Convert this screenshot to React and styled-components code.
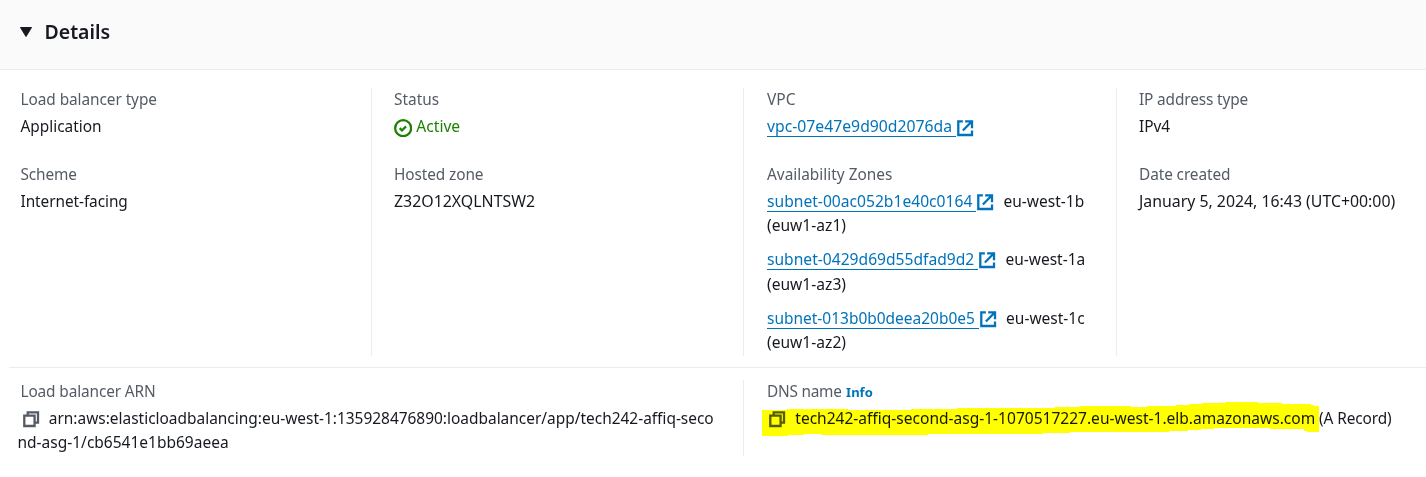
import React from "react";
import styled, { createGlobalStyle } from "styled-components";

const Global = createGlobalStyle`
  body { margin: 0; background: #fff; overflow: hidden; }
  * { box-sizing: border-box; }
`;
const Panel = styled.section`
  width: 1426px; height: 477px; background: #fff; color: #16191f;
  font: 15px/24.5px "Noto Sans", sans-serif;
`;
const Header = styled.header`
  display: flex; align-items: center; gap: 12.5px; height: 70px; padding: 0 0 5px 20px;
  background: #fafafa; border-bottom: 1px solid #eaeded;
`;
const Title = styled.h2`
  margin: 0; font-size: 19.5px; font-weight: 600; line-height: 28px;
`;
const Row = styled.div`
  display: grid; grid-template-columns: ${(p) => p.$columns}; height: ${(p) => p.$height}px;
`;
const MainRow = styled(Row)`margin-top: 18px;`;
const Divider = styled.hr`
  margin: 12px 0 12px 9px; border: 0; height: 1px; background: #eaeded;
`;
const Column = styled.div`
  display: flex; flex-direction: column; gap: 24px; min-width: 0;
  padding-left: ${(p) => p.$pad ?? 22}px;
  border-left: ${(p) => (p.$first ? "0" : "1px solid #eaeded")};
`;
const Field = styled.div`display: flex; flex-direction: column; gap: 2px; margin-top: -1px; margin-bottom: 1px;`;
const Label = styled.div`height: 24.5px; color: #545b64; white-space: nowrap;`;
const Line = styled.div`height: 24.5px; white-space: nowrap;`;
const WrappedLine = styled(Line)`margin: -2.5px 0 0 -3px;`;
const Zones = styled.div`display: flex; flex-direction: column; gap: 9.5px;`;
const T = styled.span`
  font-size: ${(p) => p.$size || 15.4}px;
  letter-spacing: ${(p) => (p.$ls ? `${p.$ls}px` : "normal")};
`;
const Region = styled(T)`margin-left: 5px;`;
const Link = styled.a`
  color: #0073bb; display: inline-flex; height: 24px;
`;
const LinkText = styled(T)`
  border-bottom: 1px solid #0073bb; height: 23px; padding-right: 4px;
`;
const Status = styled.div`display: flex; color: #1d8102; gap: 4px; height: 24.5px;`;
const Info = styled.a`color: #0073bb; font-size: 13px; line-height: 20px; font-weight: 700; margin-left: 4.5px;`;
const Icon = styled.svg`
  width: 18.3px; height: 18.3px; fill: none; stroke: currentColor; stroke-width: 2; flex: none;
`;
const InlineIcon = styled(Icon)`margin-top: ${(p) => p.$top ?? 4.5}px;`;
const StatusIcon = styled(InlineIcon)`margin-left: -0.5px; margin-right: 0.5px;`;
const CopyIcon = styled(Icon)`color: #545b64; vertical-align: -5px; margin: 0 9px 0 1px;`;
const Marked = styled.div`position: relative;`;
const Marker = styled.svg`
  position: absolute; left: -5px; top: -5.5px; width: 558px; height: 40px;
  mix-blend-mode: multiply; pointer-events: none;
`;

const External = ({ top }) => (
  <InlineIcon viewBox="0 0 16 16" $top={top}>
    <path d="M14 8V2H8M14 2 6 10M6 2H2v12h12v-4" />
  </InlineIcon>
);
const Copy = () => (
  <CopyIcon viewBox="0 0 16 16">
    <path d="M2 5h9v9H2zM5 5V2h9v9h-3" />
  </CopyIcon>
);
const Zone = ({ id, size, region, az, top }) => (
  <div>
    <Line><Link><LinkText $size={size}>{id}</LinkText><External top={top} /></Link> <Region $size={15.5}>{region}</Region></Line>
    <Line><T $size={15.6}>{az}</T></Line>
  </div>
);

export default function App() {
  return (
    <Panel>
      <Global />
      <Header>
        <svg width="12" height="10" viewBox="0 0 12 10"><path d="M0.5 0.5h11L6 9.5z" fill="#16191f" stroke="#16191f" strokeLinejoin="round" /></svg>
        <Title>Details</Title>
      </Header>
      <MainRow $columns="371px 372px 373px 1fr" $height={267}>
        <Column $first $pad={20.5}>
          <Field><Label><T $ls={-0.07}>Load balancer type</T></Label><Line><T>Application</T></Line></Field>
          <Field><Label><T $ls={-0.15}>Scheme</T></Label><Line><T $ls={-0.07}>Internet-facing</T></Line></Field>
        </Column>
        <Column>
          <Field>
            <Label><T>Status</T></Label>
            <Status>
              <StatusIcon viewBox="0 0 16 16" $top={5.3}><circle cx="8" cy="8" r="7" /><path d="m5 8 2 2 3.52-3.52" /></StatusIcon>
              <T $size={15.6}>Active</T>
            </Status>
          </Field>
          <Field><Label><T $ls={-0.1}>Hosted zone</T></Label><Line><T $size={15.9}>Z32O12XQLNTSW2</T></Line></Field>
        </Column>
        <Column $pad={23}>
          <Field>
            <Label><T $size={15.5}>VPC</T></Label>
            <Line><Link><LinkText $size={15.75}>vpc-07e47e9d90d2076da</LinkText><External top={5.3} /></Link></Line>
          </Field>
          <Field>
            <Label><T>Availability Zones</T></Label>
            <Zones>
              <Zone id="subnet-00ac052b1e40c0164" size={15.64} region="eu-west-1b" az="(euw1-az1)" />
              <Zone id="subnet-0429d69d55dfad9d2" size={15.62} region="eu-west-1a" az="(euw1-az3)" top={4} />
              <Zone id="subnet-013b0b0deea20b0e5" size={15.48} region="eu-west-1c" az="(euw1-az2)" />
            </Zones>
          </Field>
        </Column>
        <Column>
          <Field><Label><T $ls={-0.14}>IP address type</T></Label><Line><T>IPv4</T></Line></Field>
          <Field><Label><T $ls={-0.1}>Date created</T></Label><Line><T $size={15.85}>January 5, 2024, 16:43 (UTC+00:00)</T></Line></Field>
        </Column>
      </MainRow>
      <Divider />
      <Row $columns="743px 1fr" $height={76}>
        <Column $first $pad={20.5}>
          <Field>
            <Label><T $ls={-0.13}>Load balancer ARN</T></Label>
            <Line><Copy /><T $size={15.45}>arn:aws:elasticloadbalancing:eu-west-1:135928476890:loadbalancer/app/tech242-affiq-seco</T></Line>
            <WrappedLine><T $size={15.5}>nd-asg-1/cb6541e1bb69aeea</T></WrappedLine>
          </Field>
        </Column>
        <Column $pad={23}>
          <Field>
            <Label><T $ls={-0.25}>DNS name</T><Info>Info</Info></Label>
            <Marked>
              <Line><Copy /><T $size={15.54}>tech242-affiq-second-asg-1-1070517227.eu-west-1.elb.amazonaws.com</T> <T $ls={-0.1}>(A Record)</T></Line>
              <Marker viewBox="762 400 558 40" shapeRendering="crispEdges">
                <path fill="#ff0" d="M762 410H787V409H848V410H911V409H957V408H1055V407H1080V406H1131V407H1147V406H1176V405H1189V404H1202V403H1225V402H1258V403H1282V404H1311V405H1314V406H1319V432H1307V431H1304V429H1270V428H1214V429H1201V430H1188V431H1169V432H1070V433H1043V434H928V435H821V434H804V435H788V436H762Z" />
              </Marker>
            </Marked>
          </Field>
        </Column>
      </Row>
    </Panel>
  );
}
